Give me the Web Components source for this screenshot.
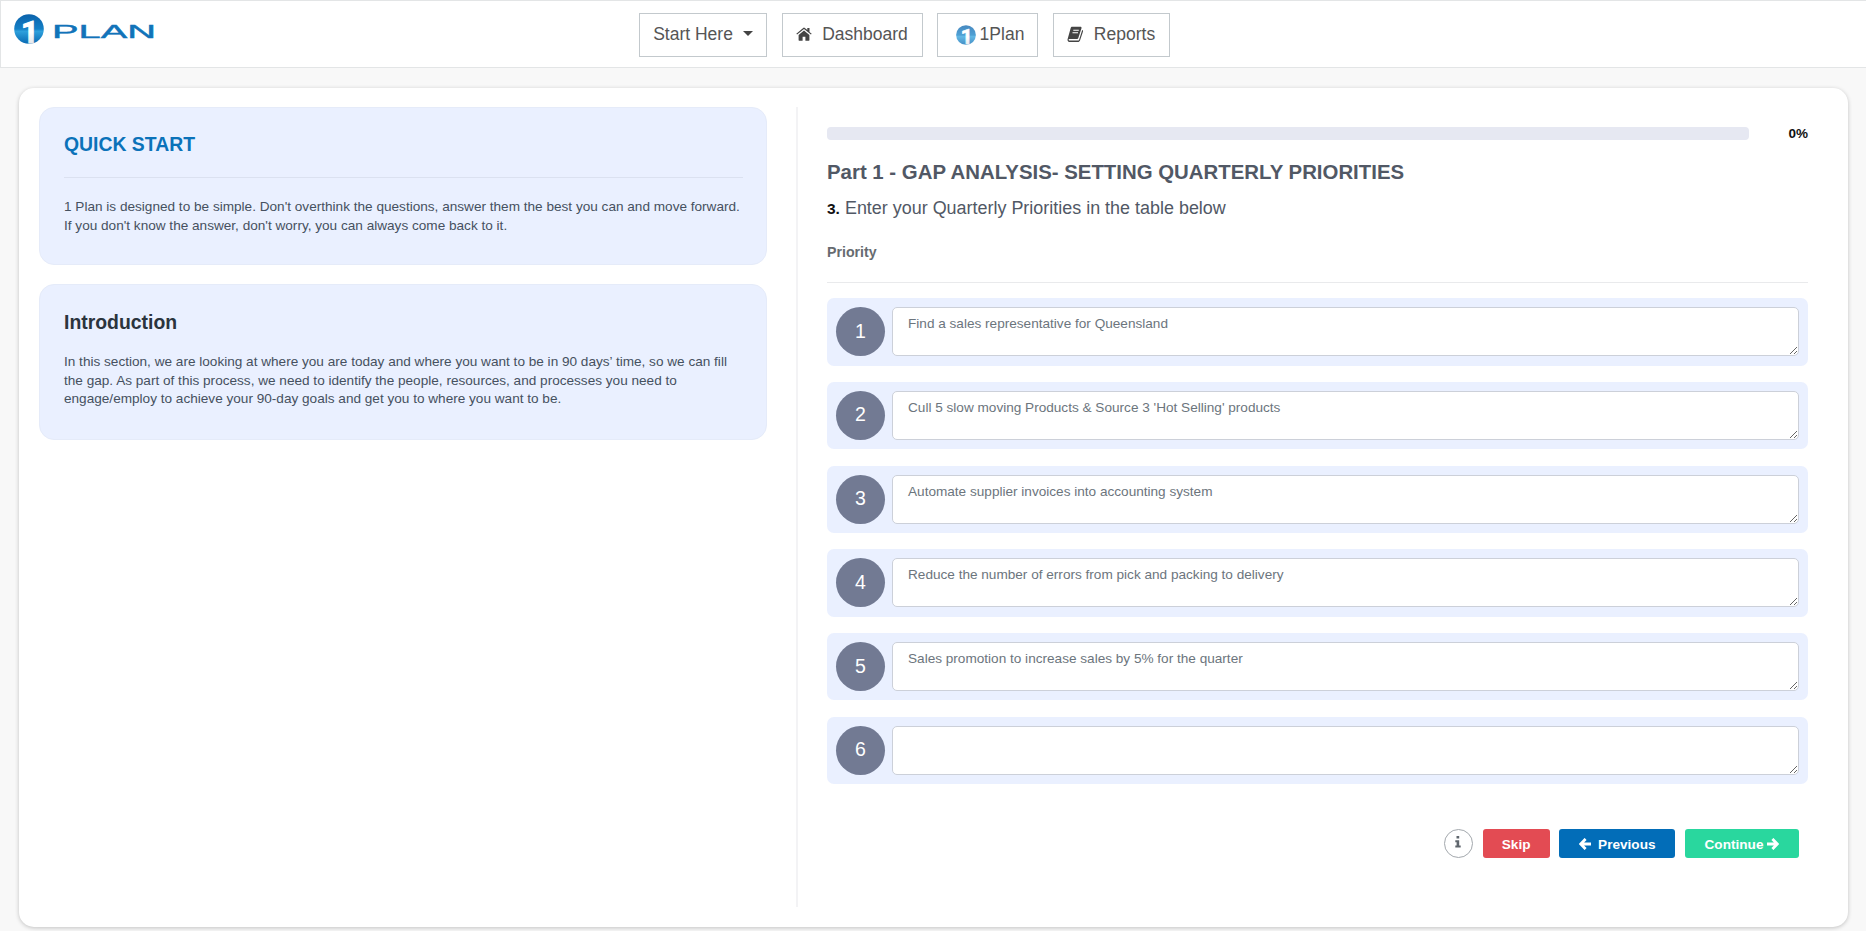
<!DOCTYPE html>
<html lang="en">
<head>
<meta charset="utf-8">
<title>1Plan</title>
<style>
   body {
      margin: 0;
      min-height: 931px;
      background: #f8f8f8;
      font-family: "Liberation Sans", Arial, sans-serif;
      color: #465160;
      overflow: hidden;
   }
</style>
</head>
<body>

<top-bar>
   <plan-logo slot="brand"></plan-logo>
   <nav-button style="width: 128px" caret>Start Here</nav-button>
   <nav-button style="width: 141px" icon="home">Dashboard</nav-button>
   <nav-button style="width: 101px" icon="plan">1Plan</nav-button>
   <nav-button style="width: 117px" icon="book">Reports</nav-button>
</top-bar>

<main-panel>
   <info-card slot="side" ruled>
      <span slot="title">QUICK START</span>
      1 Plan is designed to be simple. Don't overthink the questions, answer them the best you can and move forward.<br>
      If you don't know the answer, don't worry, you can always come back to it.
   </info-card>
   <info-card slot="side">
      <span slot="title">Introduction</span>
      In this section, we are looking at where you are today and where you want to be in 90 days’ time, so we can fill<br>
      the gap. As part of this process, we need to identify the people, resources, and processes you need to<br>
      engage/employ to achieve your 90-day goals and get you to where you want to be.
   </info-card>

   <progress-line>0%</progress-line>
   <question-head number="3.">
      <span slot="part">Part 1 - GAP ANALYSIS- SETTING QUARTERLY PRIORITIES</span>
      Enter your Quarterly Priorities in the table below
      <span slot="column">Priority</span>
   </question-head>
   <priority-list>
      <priority-row number="1">Find a sales representative for Queensland</priority-row>
      <priority-row number="2">Cull 5 slow moving Products &amp; Source 3 'Hot Selling' products</priority-row>
      <priority-row number="3">Automate supplier invoices into accounting system</priority-row>
      <priority-row number="4">Reduce the number of errors from pick and packing to delivery</priority-row>
      <priority-row number="5">Sales promotion to increase sales by 5% for the quarter</priority-row>
      <priority-row number="6"></priority-row>
   </priority-list>
   <action-bar>
      <info-button></info-button>
      <action-button style="width: 67px; --bg: #e34b53">Skip</action-button>
      <action-button style="width: 116px; --bg: #026db8" arrow="left">Previous</action-button>
      <action-button style="width: 114px; --bg: #29d79e" arrow="right">Continue</action-button>
   </action-bar>
</main-panel>

<script>
   // html is the shadow markup, or a function that builds it from the element's attributes
   function define(name, html) {
      customElements.define(name, class extends HTMLElement {
         constructor() {
            super()
            this.attachShadow({ mode: 'open' }).innerHTML = typeof html === 'function' ? html(this) : html
         }
      })
   }

   const badge = `
      <svg class="badge" viewBox="0 0 30 30" overflow="visible">
         <defs>
            <linearGradient id="disc" x1="0" y1="0" x2="0" y2="1">
               <stop offset="0" stop-color="#0b62ab"/>
               <stop offset=".5" stop-color="#1480c6"/>
               <stop offset=".58" stop-color="#2ea0dc"/>
               <stop offset="1" stop-color="#0869b2"/>
            </linearGradient>
            <linearGradient id="one" x1="0" y1="0" x2="0" y2="1">
               <stop offset=".5" stop-color="#fff"/>
               <stop offset="1" stop-color="#cfd6de"/>
            </linearGradient>
         </defs>
         <circle cx="15" cy="15" r="14.8" fill="url(#disc)"/>
         <text x="7" y="29" font-family="Roboto, sans-serif" font-weight="bold" font-size="31" fill="url(#one)" stroke="url(#one)" stroke-width="1">1</text>
      </svg>`

   // Icons of the navigation buttons
   const icons = {
      home: `<svg width="16" height="16" viewBox="0 0 16 16" fill="#444">
         <path d="M8 4.6 2.6 9v5.2c0 .3.2.5.5.5h3.5v-4h2.8v4h3.5c.3 0 .5-.2.5-.5V9z"/>
         <path d="M15.7 7.7 13.5 5.9V1.900h-2.200v2.100L8.800 1.900a1.300 1.300 0 0 0-1.600 0L.3 7.700l.8.900L8 2.900l6.900 5.700z"/>
      </svg>`,
      book: `<svg width="17" height="17" viewBox="0 0 17 17">
         <path d="M5.200.8h8.200c.9 0 1.400.7 1.100 1.500l-3.200 9.700c-.2.700-.8 1.100-1.500 1.100H2.500c-.8 0-.9.500-.8.800.2.600.7.700 1.300.7h7.900c.6 0 1-.4 1.200-.9L15.200 4c.9.400 1 .9.800 1.600l-3 9c-.3.900-1.100 1.500-2 1.500H2.800C1.500 16.100.3 15 .5 13.500L3.700 2.100C4 1.200 4.400.8 5.200.8z" fill="#444"/>
         <path d="M6.300 4.300h5.500M5.500 6.700H11" stroke="#fff" stroke-width="1.100"/>
      </svg>`,
      plan: badge
   }

   const arrows = {
      left: `<svg class="left" width="12" height="12" viewBox="0 0 12 12"><path d="M6.600.9 1.600 6l5 5.100M2 6h10" fill="none" stroke="#fff" stroke-width="2.800"/></svg>`,
      right: `<svg class="right" width="12" height="12" viewBox="0 0 12 12"><path d="M5.400.9l5 5.100-5 5.100M10 6H0" fill="none" stroke="#fff" stroke-width="2.800"/></svg>`
   }

   define('plan-logo', `
      <style>
         :host { display: flex; align-items: flex-start; }
         .badge { width: 30px; height: 30px; }
         .word { margin-left: 8px; }
      </style>
      ${badge}
      <svg class="word" width="108" height="30" viewBox="0 0 108 30">
         <text x="0" y="24" textLength="104" lengthAdjust="spacingAndGlyphs" font-family="Liberation Sans, Arial, sans-serif" font-size="18" fill="#1173b9" stroke="#1173b9" stroke-width=".4">PLAN</text>
      </svg>`)

   define('top-bar', `
      <style>
         :host {
            display: grid;
            grid-template-columns: 625px 1fr;
            height: 68px;
            box-sizing: border-box;
            background: #fff;
            border: 1px solid #e3e5e6;
            border-right: 0;
         }
         .brand { padding: 13px 0 0 13px; }
         nav { display: flex; gap: 14.500px; padding: 12px 0 0 13px; }
      </style>
      <div class="brand"><slot name="brand"></slot></div>
      <nav><slot></slot></nav>`)

   define('nav-button', el => `
      <style>
         :host {
            display: flex;
            align-items: center;
            justify-content: center;
            box-sizing: border-box;
            height: 44px;
            padding-bottom: 1px;
            border: 1px solid #c3c9cd;
            font-size: 17.500px;
            color: #555;
            white-space: nowrap;
            cursor: pointer;
         }
         svg { margin: 0 10px 1px 0; }
         .badge { width: 20px; height: 20px; margin: 0 4px 0 5px; opacity: .75; }
         .caret { margin-left: 10px; margin-bottom: 3px; border: 5px solid transparent; border-top-color: #444; border-bottom: 0; }
      </style>
      ${icons[el.getAttribute('icon')] || ''}<slot></slot>${el.hasAttribute('caret') ? '<span class="caret"></span>' : ''}`)

   define('main-panel', `
      <style>
         :host {
            display: grid;
            grid-template-columns: 728px 1fr;
            box-sizing: border-box;
            height: 839px;
            margin: 20px 18px 0 19px;
            padding: 19px 40px 20px 20px;
            background: #fff;
            border-radius: 15px;
            box-shadow: 0 1px 4px rgba(0, 0, 0, .22);
         }
         aside { display: flex; flex-direction: column; gap: 19px; }
         section { margin-left: 29px; padding: 20px 0 0 29px; border-left: 2px solid #f3f3f5; }
      </style>
      <aside><slot name="side"></slot></aside>
      <section><slot></slot></section>`)

   define('info-card', el => `
      <style>
         :host {
            display: block;
            box-sizing: border-box;
            padding: 25px 23px 25px 24px;
            height: ${el.hasAttribute('ruled') ? 158 : 156}px;
            background: #eaf0ff;
            border: 1px solid #e5ebf9;
            border-radius: 15px;
         }
         h2 { margin: 0; font-size: 19.400px; line-height: 24px; color: #2b343d; }
         p { margin: 19px 0 0; font-size: 13.600px; line-height: 18.600px; white-space: nowrap; }
         :host([ruled]) h2 { line-height: 22px; padding-bottom: 22px; border-bottom: 1px solid #dbe1f0; color: #0b72b9; }
         :host([ruled]) p { margin-top: 20px; }
      </style>
      <h2><slot name="title"></slot></h2>
      <p><slot></slot></p>`)

   define('progress-line', `
      <style>
         :host { display: flex; align-items: center; justify-content: space-between; height: 13px; font-size: 13.500px; font-weight: bold; color: #111; }
         .track { width: 922px; height: 13px; border-radius: 4px; background: #e6e8f2; }
      </style>
      <div class="track"></div><slot></slot>`)

   define('question-head', el => `
      <style>
         :host { display: block; box-sizing: border-box; height: 143px; color: #515865; border-bottom: 1px solid #e9eaec; }
         h1 { margin: 0; padding-top: 20px; font-size: 20.400px; line-height: 24px; white-space: nowrap; }
         p { margin: 12px 0 0; font-size: 17.950px; line-height: 24px; }
         b { font-size: 15.500px; color: #111; }
         .column { padding-top: 22px; font-size: 14.200px; line-height: 18px; font-weight: bold; color: #666b70; }
      </style>
      <h1><slot name="part"></slot></h1>
      <p><b>${el.getAttribute('number')}</b> <slot></slot></p>
      <div class="column"><slot name="column"></slot></div>`)

   define('priority-list', `
      <style>
         :host { display: flex; flex-direction: column; gap: 16.400px; padding-top: 15.300px; }
      </style>
      <slot></slot>`)

   define('priority-row', el => `
      <style>
         :host {
            display: flex;
            gap: 7px;
            box-sizing: border-box;
            height: 67.300px;
            padding: 9px 9px 9.300px;
            background: #eaf0ff;
            border-radius: 7px;
         }
         .number {
            display: flex;
            align-items: center;
            justify-content: center;
            box-sizing: border-box;
            width: 49px;
            height: 49px;
            padding-bottom: 1px;
            border-radius: 50%;
            background: #727a93;
            color: #fff;
            font-size: 19.500px;
         }
         .field {
            flex: 1;
            box-sizing: border-box;
            height: 49px;
            padding: 7px 15px;
            border: 1px solid #ccd0d9;
            border-radius: 5px;
            background: #fff;
            color: #6c757d;
            font-size: 13.600px;
            line-height: 18px;
            overflow: auto;
            resize: both;
         }
      </style>
      <div class="number">${el.getAttribute('number')}</div>
      <div class="field" contenteditable="true"><slot></slot></div>`)

   define('action-bar', `
      <style>
         :host { display: flex; justify-content: flex-end; gap: 9.700px; padding: 44.700px 9px 0 0; }
      </style>
      <slot></slot>`)

   define('info-button', `
      <style>
         :host { display: flex; align-items: center; justify-content: center; box-sizing: border-box; width: 29px; height: 29px; border: 1px solid #a3a8ad; border-radius: 50%; }
         svg { margin-bottom: 3px; }
      </style>
      <svg width="6" height="12" viewBox="0 0 6 12" fill="#5f666d">
         <path d="M1.500 0h2.700v2.500H1.500zM.3 4.300h3.900v5.300H5.700v1.900H.3V9.600h1.300V6.200H.3z"/>
      </svg>`)

   define('action-button', el => {
      const arrow = el.getAttribute('arrow')
      return `
      <style>
         :host {
            display: flex;
            align-items: center;
            justify-content: center;
            box-sizing: border-box;
            height: 29px;
            padding-top: 2px;
            border-radius: 3px;
            background: var(--bg);
            color: #fff;
            font-size: 13.600px;
            font-weight: bold;
            cursor: pointer;
         }
         .left { margin-right: 7px; }
         .right { margin-left: 4px; }
      </style>
      ${arrow === 'left' ? arrows.left : ''}<slot></slot>${arrow === 'right' ? arrows.right : ''}`
   })
</script>
</body>
</html>
